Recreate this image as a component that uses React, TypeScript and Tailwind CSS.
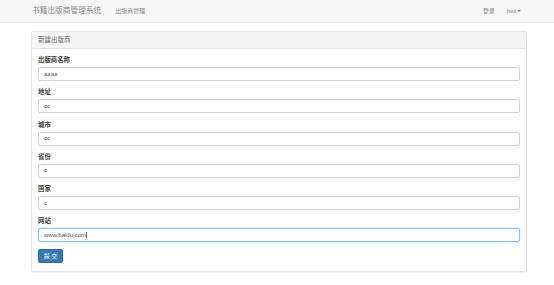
import React from 'react';

const fields = [
  { label: '出版商名称', value: 'aaaa' },
  { label: '地址', value: 'cc' },
  { label: '城市', value: 'cc' },
  { label: '省份', value: 'c' },
  { label: '国家', value: 'c' },
];

const font = { fontFamily: '"Liberation Sans", "Noto Sans CJK SC", sans-serif' };

const App: React.FC = () => {
  return (
    <div className="w-[554px] h-[285px] bg-white text-[#333]" style={font}>
      {/* navbar */}
      <div className="h-[23px] bg-[#f8f8f8] border-b border-[#e7e7e7] flex items-center text-[#888]">
        <span className="ml-[32px] text-[7.7px] leading-none">书籍出版商管理系统</span>
        <span className="ml-[14px] text-[6px] leading-none">出版商管理</span>
        <span className="ml-auto text-[6px] leading-none">登录</span>
        <span className="ml-[12px] mr-[33px] text-[6px] leading-none flex items-center">
          hwt
          <span className="ml-[1px] w-0 h-0 border-l-[2px] border-r-[2px] border-t-[2px] border-l-transparent border-r-transparent border-t-[#888]" />
        </span>
      </div>

      {/* panel */}
      <div className="ml-[31px] mt-[8px] w-[496px] h-[241px] border border-[#e3e3e3] rounded-[2px] shadow-[0_1px_1px_rgba(0,0,0,0.05)]">
        <div className="h-[17px] bg-[#f5f5f5] border-b border-[#e3e3e3] flex items-center px-[6px] text-[6.5px] text-[#666]">
          新建出版商
        </div>
        <div className="px-[6px] pt-[6px]">
          {fields.map((f) => (
            <div key={f.label} className="mb-[6.3px]">
              <div className="h-[9px] leading-[9px] text-[6.4px] font-bold mb-[3px] text-[#444]">{f.label}</div>
              <div className="h-[14px] border border-[#d6d6d6] rounded-[2px] shadow-[inset_0_1px_1px_rgba(0,0,0,0.05)] flex items-center px-[5px] text-[6px] text-[#666]">
                {f.value}
              </div>
            </div>
          ))}
          <div className="mb-[6.3px]">
            <div className="h-[9px] leading-[9px] text-[6.4px] font-bold mb-[3px] text-[#444]">网站</div>
            <div className="h-[14px] border border-[#8cc2ec] rounded-[2px] shadow-[0_0_2px_rgba(102,175,233,0.5)] flex items-center px-[5px] text-[6px] text-[#555]">
              www.baidu.com
              <span className="w-px h-[6px] bg-[#777]" />
            </div>
          </div>
          <button className="w-[25px] h-[14px] bg-[#337ab7] border border-[#2e6da4] rounded-[2px] text-white text-[6px] leading-none flex items-center justify-center">
            提 交
          </button>
        </div>
      </div>
    </div>
  );
};

export default App;
